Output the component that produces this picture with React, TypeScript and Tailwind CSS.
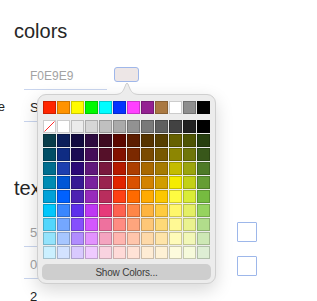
import React from "react";

const TOP = ["#ff2600", "#ff9300", "#fffb00", "#00f900", "#00fdff", "#0433ff", "#ff40ff", "#942192", "#aa7942", "#ffffff", "#8e8e8e", "#000000"];
const GRAYS = ["none", "#ffffff", "#ebebeb", "#d6d6d6", "#c0c0c0", "#aaaaaa", "#929292", "#797979", "#5f5f5f", "#424242", "#212121", "#000000"];
const COLORS = [
  ["#0a3d4a", "#0c1f5a", "#120a3f", "#2e0b40", "#3d0a20", "#5c0800", "#5c1d00", "#573400", "#563e00", "#666100", "#4f5504", "#263e0f"],
  ["#004d65", "#0f2c83", "#1a0a52", "#450d59", "#551029", "#831100", "#7b2900", "#7a4a00", "#785800", "#8d8602", "#6f760a", "#38571a"],
  ["#016e8f", "#1d3fb0", "#2c0977", "#61187c", "#79193d", "#b51a00", "#ad3e00", "#a96800", "#a67b01", "#c4bc00", "#9ba50e", "#4e7a27"],
  ["#008cb4", "#0056d6", "#371a94", "#7a219e", "#99244f", "#e22400", "#da5100", "#d38301", "#d19d01", "#f5ec00", "#c3d117", "#669d34"],
  ["#00a1d8", "#0061fe", "#4d22b2", "#982abc", "#b92d5d", "#ff4015", "#ff6a00", "#ffab01", "#fcc700", "#fefb41", "#d9ec37", "#76bb40"],
  ["#01c7fc", "#3a87fe", "#5e30eb", "#be38f3", "#e63b7a", "#fe6250", "#fe8648", "#feb43f", "#fecb3e", "#fff76b", "#e4ef65", "#96d35f"],
  ["#52d6fc", "#74a7ff", "#864ffd", "#d357fe", "#ee719e", "#ff8c82", "#fea57d", "#fec777", "#fed977", "#fff994", "#eaf28f", "#b1dd8b"],
  ["#93e3fc", "#a7c6ff", "#b18cfe", "#e292fe", "#f4a4c0", "#ffb5af", "#ffc5ab", "#fed9a8", "#fee4a8", "#fffbb9", "#f2f7b7", "#cde8b5"],
  ["#cbf0ff", "#d3e2ff", "#d9c9fe", "#efcaff", "#f9d3e0", "#ffdad8", "#ffe2d6", "#feecd4", "#fef1d5", "#fdfbdd", "#f6fadb", "#deeed4"],
];

function Cell({ color }: { color: string }) {
  if (color === "none") {
    return (
      <div className="relative h-[13px] w-[13px] border border-black/20 bg-white">
        <svg className="absolute inset-0" width="11" height="11" viewBox="0 0 11 11">
          <line x1="0.5" y1="10.5" x2="10.5" y2="0.5" stroke="#ff2a2a" strokeWidth="1" />
        </svg>
      </div>
    );
  }
  return <div className="h-[13px] w-[13px] border border-black/20" style={{ backgroundColor: color }} />;
}

function Row({
  label,
  value,
  muted,
  small,
  children,
}: {
  label?: string;
  value: string;
  muted?: boolean;
  small?: boolean;
  children?: React.ReactNode;
}) {
  return (
    <div className="flex h-[32px] items-end">
      <div className="flex h-[28px] w-[24px] shrink-0 items-center justify-end pr-[19px] pb-[3px] text-[13px] text-[#222]">
        {label ? <span className="shrink-0 whitespace-nowrap">{label}</span> : null}
      </div>
      <div
        className={`flex h-[28px] w-[83px] shrink-0 items-center border-b border-[#c9d5ee] pl-[6px] ${
          small ? "text-[12px]" : "text-[13px]"
        } ${muted ? "text-[#a3a3a3]" : "text-[#222]"}`}
      >
        <span className="whitespace-nowrap">{value}</span>
      </div>
      {children}
    </div>
  );
}

function Popover() {
  return (
    <div className="absolute left-[37px] top-[94px] w-[179px] rounded-[9px] border border-[#cfcfcf] bg-[#ececec] px-[5px] pt-[6px] pb-[3px] shadow-[0_6px_18px_rgba(0,0,0,0.16)]">
      <svg className="absolute left-[76px] top-[-14px]" width="26" height="14" viewBox="0 0 26 14">
        <path d="M0,14 L0,13.5 C6,13.5 8,12 10,8 L12,3 Q13,1 14,3 L16,8 C18,12 20,13.5 26,13.5 L26,14 Z" fill="#ececec" />
        <path d="M0,13.5 C6,13.5 8,12 10,8 L12,3 Q13,1 14,3 L16,8 C18,12 20,13.5 26,13.5" fill="none" stroke="#cfcfcf" strokeWidth="1" />
      </svg>
      <div className="grid grid-cols-12 gap-px">
        {TOP.map((c, i) => (
          <Cell key={i} color={c} />
        ))}
      </div>
      <div className="mt-[6px] grid grid-cols-12 gap-px">
        {GRAYS.map((c, i) => (
          <Cell key={"g" + i} color={c} />
        ))}
        {COLORS.flat().map((c, i) => (
          <Cell key={"c" + i} color={c} />
        ))}
      </div>
      <button className="-mx-px mt-[5px] flex h-[16px] w-[169px] items-center justify-center rounded-[5px] bg-[#cecece] text-[10px] tracking-[-0.2px] text-[#3c3c3c]">
        Show Colors...
      </button>
    </div>
  );
}

export default function App() {
  return (
    <div className="relative h-[301px] w-[317px] overflow-hidden bg-white font-['Liberation_Sans',Arial,sans-serif] text-[#222]">
      <section>
        <h2 className="pl-[14px] pt-[19px] text-[20px] leading-[24px] font-normal text-[#262626]">colors</h2>
        <div className="mt-[15px] flex flex-col">
          <Row value="F0E9E9" muted small>
            <div className="mb-[8px] ml-[7px] h-[15px] w-[25px] rounded-[3px] border border-[#9fb7ea] bg-[#ede6e6]" />
          </Row>
          <Row label="Name" value="Sample text" />
        </div>
      </section>
      <section className="mt-[54px]">
        <h2 className="pl-[14px] text-[20px] leading-[24px] font-normal text-[#262626]">text</h2>
        <div className="mt-[15px] flex flex-col">
          <Row value="5" muted>
            <div className="mb-[5px] ml-[130px] h-[20px] w-[20px] rounded-[1px] border border-[#9db7ea] bg-white" />
          </Row>
          <Row value="0" muted>
            <div className="mb-[3px] ml-[130px] h-[20px] w-[20px] rounded-[1px] border border-[#9db7ea] bg-white" />
          </Row>
          <Row value="2" />
        </div>
      </section>
      <Popover />
    </div>
  );
}
